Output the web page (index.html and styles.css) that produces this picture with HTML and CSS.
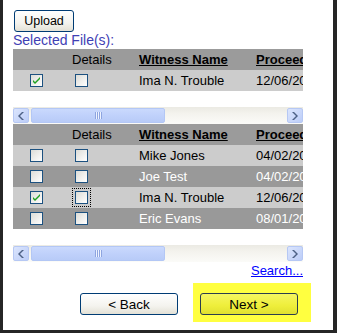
FILE: index.html
```html
<!DOCTYPE html>
<html>
<head>
<meta charset="utf-8">
<link rel="stylesheet" href="styles.css">
</head>
<body>
<div class="frame">
  <button class="btn upload">Upload</button>
  <div class="label">Selected File(s):</div>

  <div class="grid">
    <div class="row head">
      <div class="c1"></div>
      <div class="c2">Details</div>
      <div class="c3"><u>Witness Name</u></div>
      <div class="c4"><u>Proceeding Date</u></div>
    </div>
    <div class="row light">
      <div class="c1"><span class="cb checked"><svg viewBox="0 0 7 7" width="7" height="7"><path d="M0 3 L2 5 L7 0 L7 2 L2 7 L0 5 Z" fill="#21a121"/></svg></span></div>
      <div class="c2"><span class="cb"></span></div>
      <div class="c3">Ima N. Trouble</div>
      <div class="c4">12/06/2008</div>
    </div>
  </div>
  <div class="hscroll">
    <div class="sbtn"><svg viewBox="0 0 8 8" width="8" height="8"><path d="M5 0 L7 0 L3 4 L7 8 L5 8 L1 4 Z" fill="#4d6185"/></svg></div>
    <div class="thumb"><span class="grip"></span></div>
    <div class="track"></div>
    <div class="sbtn"><svg viewBox="0 0 8 8" width="8" height="8"><path d="M3 0 L1 0 L5 4 L1 8 L3 8 L7 4 Z" fill="#4d6185"/></svg></div>
  </div>

  <div class="grid second">
    <div class="row head">
      <div class="c1"></div>
      <div class="c2">Details</div>
      <div class="c3"><u>Witness Name</u></div>
      <div class="c4"><u>Proceeding Date</u></div>
    </div>
    <div class="row light">
      <div class="c1"><span class="cb"></span></div>
      <div class="c2"><span class="cb"></span></div>
      <div class="c3">Mike Jones</div>
      <div class="c4">04/02/2008</div>
    </div>
    <div class="row dark">
      <div class="c1"><span class="cb"></span></div>
      <div class="c2"><span class="cb"></span></div>
      <div class="c3">Joe Test</div>
      <div class="c4">04/02/2008</div>
    </div>
    <div class="row light">
      <div class="c1"><span class="cb checked"><svg viewBox="0 0 7 7" width="7" height="7"><path d="M0 3 L2 5 L7 0 L7 2 L2 7 L0 5 Z" fill="#21a121"/></svg></span></div>
      <div class="c2"><span class="cb focus"></span></div>
      <div class="c3">Ima N. Trouble</div>
      <div class="c4">12/06/2008</div>
    </div>
    <div class="row dark">
      <div class="c1"><span class="cb"></span></div>
      <div class="c2"><span class="cb"></span></div>
      <div class="c3">Eric Evans</div>
      <div class="c4">08/01/2008</div>
    </div>
  </div>
  <div class="hscroll">
    <div class="sbtn"><svg viewBox="0 0 8 8" width="8" height="8"><path d="M5 0 L7 0 L3 4 L7 8 L5 8 L1 4 Z" fill="#4d6185"/></svg></div>
    <div class="thumb"><span class="grip"></span></div>
    <div class="track"></div>
    <div class="sbtn"><svg viewBox="0 0 8 8" width="8" height="8"><path d="M3 0 L1 0 L5 4 L1 8 L3 8 L7 4 Z" fill="#4d6185"/></svg></div>
  </div>

  <div class="search"><a href="#">Search...</a></div>

  <div class="actions">
    <button class="btn nav back">&lt; Back</button>
    <div class="highlight">
      <button class="btn nav next">Next &gt;</button>
    </div>
  </div>
</div>
</body>
</html>
```

FILE: styles.css
```css
html, body {
  margin: 0;
  padding: 0;
  background: #262626;
  width: 337px;
  height: 333px;
  overflow: hidden;
}

.frame {
  margin-left: 3px;
  width: 320px;
  height: 330px;
  padding-left: 10px;
  background: #ffffff;
  font-family: "Liberation Sans", Arial, sans-serif;
  font-size: 13px;
  color: #000;
  overflow: hidden;
}

.btn {
  display: block;
  box-sizing: border-box;
  font-family: "Liberation Sans", Arial, sans-serif;
  color: #000;
  border: 1px solid #003c74;
  border-radius: 3px;
  background: linear-gradient(#ffffff, #f4f3ee 60%, #e3e1d6);
  padding: 0;
  margin: 0;
}

.upload {
  margin: 10px 0 0 1px;
  width: 60px;
  height: 22px;
  font-size: 12.5px;
}

.label {
  height: 17px;
  line-height: 17px;
  font-size: 14px;
  color: #4040b4;
}

.grid {
  width: 290px;
  overflow: hidden;
}

.row {
  display: flex;
  width: 400px;
  height: 21px;
  line-height: 21px;
  align-items: center;
  white-space: nowrap;
}

.row.head { background: #9b9b9b; }
.row.light { background: #cccccc; color: #000; }
.row.dark { background: #999999; color: #ffffff; }

.head u { font-weight: bold; }

.c1 { width: 38px; padding-left: 17px; display: flex; align-items: center; height: 21px; }
.c2 { width: 63px; padding-left: 4px; display: flex; align-items: center; height: 21px; }
.c3 { width: 113px; padding-left: 4px; }
.c4 { padding-left: 4px; }

.c2 .cb { margin-left: 3px; }

.cb {
  display: inline-flex;
  align-items: center;
  justify-content: center;
  box-sizing: border-box;
  width: 13px;
  height: 13px;
  border: 1px solid #1c5180;
  background: linear-gradient(135deg, #dcdcd7, #ffffff);
}

.cb.focus {
  outline: 1px dotted #000;
  outline-offset: 2px;
}

.hscroll {
  display: flex;
  width: 290px;
  height: 17px;
  box-sizing: border-box;
  margin-top: 16px;
  padding: 1px 0;
  background: linear-gradient(#ebeae3, #f4f3ee 40%, #fbfbf8);
}

.sbtn {
  box-sizing: border-box;
  width: 16px;
  height: 15px;
  border: 1px solid #b6c8f4;
  border-radius: 2px;
  background: linear-gradient(135deg, #dbe5fd, #bccdf8);
  display: flex;
  align-items: center;
  justify-content: center;
}

.thumb {
  box-sizing: border-box;
  margin-left: 2px;
  width: 134px;
  height: 15px;
  border: 1px solid #b3c7f5;
  border-radius: 2px;
  background: linear-gradient(#cad9fd, #c0d1fb 50%, #b8cbf8);
  display: flex;
  align-items: center;
  justify-content: center;
}

.grip {
  width: 7px;
  height: 7px;
  background: repeating-linear-gradient(90deg, #8ea5e0 0 1px, #eef3ff 1px 2px);
}

.track { flex: 1; }

.grid.second { margin-top: 0; }
.hscroll + .grid { margin-top: 0; border-top: 0; }

.search {
  width: 290px;
  text-align: right;
  height: 16px;
  line-height: 16px;
  margin-top: 1px;
}

.search a {
  color: #0000ff;
  text-decoration: underline;
}

.actions {
  display: flex;
  align-items: flex-start;
  margin-top: 4px;
}

.nav {
  width: 98px;
  height: 22px;
  font-size: 13.5px;
}

.back {
  margin: 10px 0 0 67px;
}

.highlight {
  margin-left: 15px;
  background: #ffff40;
  padding: 10px 13px 7px 7px;
}

.next {
  border-color: #2b3d4e;
  background: linear-gradient(#f6f660, #eeee3a 60%, #e0e030);
}
```
